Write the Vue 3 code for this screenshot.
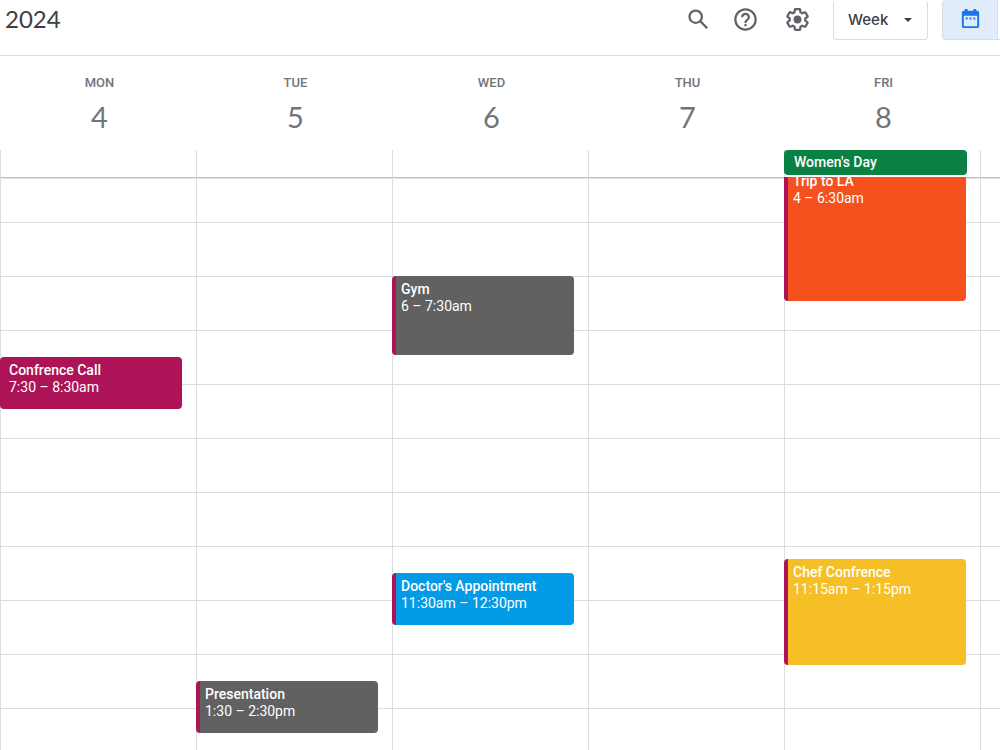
<script setup>
import { ref } from 'vue'

const HOUR = 54
const FIRST_HOUR = 4
const SCROLLED = 9

const view = ref('Week')

const days = [
  { name: 'Mon', date: 4, events: [
    { title: 'Confrence Call', time: '7:30 – 8:30am', start: 7.5, end: 8.5, tone: 'berry' },
  ] },
  { name: 'Tue', date: 5, events: [
    { title: 'Presentation', time: '1:30 – 2:30pm', start: 13.5, end: 14.5, tone: 'graphite' },
  ] },
  { name: 'Wed', date: 6, events: [
    { title: 'Gym', time: '6 – 7:30am', start: 6, end: 7.5, tone: 'graphite' },
    { title: "Doctor's Appointment", time: '11:30am – 12:30pm', start: 11.5, end: 12.5, tone: 'blue' },
  ] },
  { name: 'Thu', date: 7, events: [] },
  { name: 'Fri', date: 8, allDay: "Women's Day", events: [
    { title: 'Trip to LA', time: '4 – 6:30am', start: 4, end: 6.5, tone: 'orange' },
    { title: 'Chef Confrence', time: '11:15am – 1:15pm', start: 11.25, end: 13.25, tone: 'yellow' },
  ] },
]

const place = (e) => ({
  top: Math.floor((e.start - FIRST_HOUR) * HOUR) - SCROLLED + 'px',
  height: (e.end - e.start) * HOUR - 2 + 'px',
})
</script>

<template>
  <div class="calendar">
    <header class="toolbar">
      <h1 class="year">2024</h1>
      <div class="tools">
        <button class="icon-btn" type="button" aria-label="Search">
          <svg viewBox="0 0 24 24"><path d="M20.49 19l-5.73-5.73C15.53 12.2 16 10.91 16 9.5A6.5 6.5 0 1 0 9.5 16c1.41 0 2.7-.47 3.77-1.24L19 20.49 20.49 19zM5 9.5C5 7.01 7.01 5 9.5 5S14 7.01 14 9.5 11.99 14 9.5 14 5 11.99 5 9.5z" /></svg>
        </button>
        <button class="icon-btn" type="button" aria-label="Support">
          <svg viewBox="0 0 24 24"><path d="M11 18h2v-2h-2v2zm1-16C6.48 2 2 6.48 2 12s4.48 10 10 10 10-4.48 10-10S17.52 2 12 2zm0 18c-4.41 0-8-3.59-8-8s3.59-8 8-8 8 3.59 8 8-3.59 8-8 8zm0-14c-2.21 0-4 1.79-4 4h2c0-1.1.9-2 2-2s2 .9 2 2c0 2-3 1.75-3 5h2c0-2.25 3-2.5 3-5 0-2.21-1.79-4-4-4z" /></svg>
        </button>
        <button class="icon-btn settings" type="button" aria-label="Settings">
          <svg viewBox="0 0 24 24"><path d="M13.85 22.25h-3.7c-.74 0-1.36-.54-1.45-1.27l-.27-1.89c-.27-.14-.53-.29-.79-.46l-1.8.72c-.7.26-1.47-.03-1.81-.65L2.2 15.53c-.35-.66-.2-1.44.36-1.88l1.53-1.19c-.01-.15-.02-.3-.02-.46 0-.15.01-.31.02-.46l-1.52-1.19c-.59-.45-.74-1.26-.37-1.88l1.85-3.19c.34-.62 1.11-.9 1.79-.63l1.81.73c.26-.17.52-.32.78-.46l.27-1.91c.09-.7.71-1.25 1.44-1.25h3.7c.74 0 1.36.54 1.45 1.27l.27 1.89c.27.14.53.29.79.46l1.8-.72c.71-.26 1.48.03 1.82.65l1.84 3.18c.36.66.2 1.44-.36 1.88l-1.52 1.19c.01.15.02.3.02.46s-.01.31-.02.46l1.52 1.19c.56.45.72 1.23.37 1.86l-1.86 3.22c-.34.62-1.11.9-1.8.63l-1.8-.72c-.26.17-.52.32-.78.46l-.27 1.91c-.1.68-.72 1.22-1.46 1.22zm-3.23-2h2.76l.37-2.55.53-.22c.44-.18.88-.44 1.34-.78l.45-.34 2.38.96 1.38-2.4-2.03-1.58.07-.56c.03-.26.06-.51.06-.78s-.03-.53-.06-.78l-.07-.56 2.03-1.58-1.39-2.4-2.39.96-.45-.35c-.42-.32-.87-.58-1.33-.77l-.52-.22-.37-2.55h-2.76l-.37 2.55-.53.21c-.44.19-.88.44-1.34.79l-.45.33-2.38-.95-1.39 2.39 2.03 1.58-.07.56a7 7 0 0 0-.06.79c0 .26.02.53.06.78l.07.56-2.03 1.58 1.38 2.4 2.39-.96.45.35c.43.33.86.58 1.33.77l.53.22.38 2.55z" /><circle cx="12" cy="12" r="3.5" /></svg>
        </button>
        <div class="view">
          <select v-model="view" aria-label="Calendar view">
            <option>Day</option>
            <option>Week</option>
            <option>Month</option>
          </select>
          <svg class="caret" viewBox="0 0 10 5"><path d="M0 0h10L5 5z" /></svg>
        </div>
        <div class="switch">
          <button class="switch-btn active" type="button" aria-label="Calendar">
            <svg viewBox="0 0 24 24"><path d="M19 4h-1V2h-3v2H9V2H6v2H5c-1.11 0-2 .9-2 2v14c0 1.1.89 2 2 2h14c1.1 0 2-.9 2-2V6c0-1.1-.9-2-2-2zm0 16H5V9h14v11zM7 11h2v2H7zm4 0h2v2h-2zm4 0h2v2h-2z" /></svg>
          </button>
          <button class="switch-btn" type="button" aria-label="Tasks"></button>
        </div>
      </div>
    </header>

    <div class="week heads">
      <h2 v-for="d in days" :key="d.date" class="head">
        <span class="name">{{ d.name }}</span>
        <span class="date">{{ d.date }}</span>
      </h2>
    </div>

    <div class="week all-day">
      <div v-for="d in days" :key="d.date" class="col">
        <button v-if="d.allDay" class="banner" type="button">{{ d.allDay }}</button>
      </div>
      <div class="col"></div>
    </div>

    <main class="week hours">
      <div v-for="d in days" :key="d.date" class="col">
        <button
          v-for="e in d.events"
          :key="e.title"
          type="button"
          class="event"
          :class="e.tone"
          :style="place(e)"
        >
          <span class="title">{{ e.title }}</span>
          <span class="time">{{ e.time }}</span>
        </button>
      </div>
      <div class="col"></div>
    </main>
  </div>
</template>

<style>
body {
  margin: 0;
  background: #fff;
}
</style>

<style scoped>
* {
  box-sizing: border-box;
}
.calendar {
  display: flex;
  flex-direction: column;
  height: 100vh;
  overflow: hidden;
  background: #fff;
  font-family: Roboto, "Liberation Sans", sans-serif;
  color: #3c4043;
}
button,
select {
  font: inherit;
  color: inherit;
  margin: 0;
}
.toolbar {
  display: flex;
  justify-content: space-between;
  flex: none;
  height: 56px;
  border-bottom: 1px solid #dadce0;
}
.year {
  margin: 0;
  padding-left: 5px;
  font: 400 24px/38px Lato, sans-serif;
}
.tools {
  display: flex;
  height: 40px;
}
.icon-btn {
  display: grid;
  place-items: center;
  width: 40px;
  height: 38px;
  margin-right: 7px;
  padding: 0;
  border: 0;
  background: none;
}
.icon-btn:nth-child(2) {
  margin-right: 12px;
}
.icon-btn.settings {
  margin-right: 16px;
}
.icon-btn svg {
  width: 27px;
  height: 27px;
  fill: #5f6368;
}
.view {
  position: relative;
  margin-right: 14px;
}
.view select {
  appearance: none;
  width: 95px;
  height: 40px;
  padding: 0 32px 2px 14px;
  border: 1px solid #dadce0;
  border-top-color: #fff;
  border-radius: 4px;
  background: #fff;
  font-family: Inter, Roboto, sans-serif;
  font-size: 15px;
  font-weight: 500;
}
.caret {
  position: absolute;
  right: 16px;
  top: 18px;
  width: 8px;
  height: 4px;
  fill: #3c4043;
  pointer-events: none;
}
.switch {
  display: flex;
  width: 58px;
  overflow: hidden;
}
.switch-btn {
  display: grid;
  place-items: center;
  flex: none;
  width: 56px;
  height: 40px;
  padding: 0 0 2px;
  border: 1px solid #dadce0;
  border-top: 0;
  border-left: 0;
  background: #fff;
}
.switch-btn.active {
  border-left: 1px solid #dadce0;
  border-radius: 4px 0 0 4px;
  background: #e1ecfb;
}
.switch-btn svg {
  width: 23px;
  height: 23px;
  fill: #1a73e8;
}
.week {
  display: grid;
  grid-template-columns: repeat(5, 49fr) 5fr;
}
.heads {
  flex: none;
  height: 94px;
}
.head {
  display: flex;
  flex-direction: column;
  align-items: center;
  margin: 0;
  padding: 19px 0 0 3px;
  color: #70757a;
  font-weight: 500;
}
.name {
  font-size: 13px;
  line-height: 16px;
  text-transform: uppercase;
}
.date {
  margin-top: 8px;
  font: 400 29px/36px Lato, sans-serif;
}
.col {
  position: relative;
  min-width: 0;
  border-left: 1px solid #dadce0;
}
.all-day {
  flex: none;
  height: 27px;
}
.banner {
  display: block;
  width: calc(100% - 12px);
  height: 25px;
  margin-left: -1px;
  padding: 0 10px 2px;
  border: 0;
  border-radius: 4px;
  background: #0b8043;
  color: #fff;
  font-size: 14px;
  font-weight: 500;
  text-align: left;
}
.hours {
  position: relative;
  flex: 1;
  overflow: hidden;
  background: repeating-linear-gradient(#dadce0 0 1px, transparent 1px 54px) 0 -9px / 100% 1296px;
}
.hours::before {
  content: "";
  position: absolute;
  inset: 0 0 auto;
  height: 2px;
  background: linear-gradient(#bbbdc0 50%, #e4e5e7 50%);
}
.event {
  position: absolute;
  left: -1px;
  right: 14px;
  display: flex;
  flex-direction: column;
  overflow: hidden;
  padding: 5px 5px 0;
  border: 0;
  border-left: 4px solid #ad1457;
  border-radius: 4px;
  color: #fff;
  font-size: 14px;
  line-height: 17px;
  text-align: left;
  white-space: nowrap;
}
.title {
  font-weight: 500;
}
.berry {
  background: #ad1457;
}
.graphite {
  background: #616161;
}
.blue {
  background: #039be5;
}
.orange {
  background: #f4511e;
}
.yellow {
  background: #f6bf26;
}
</style>
